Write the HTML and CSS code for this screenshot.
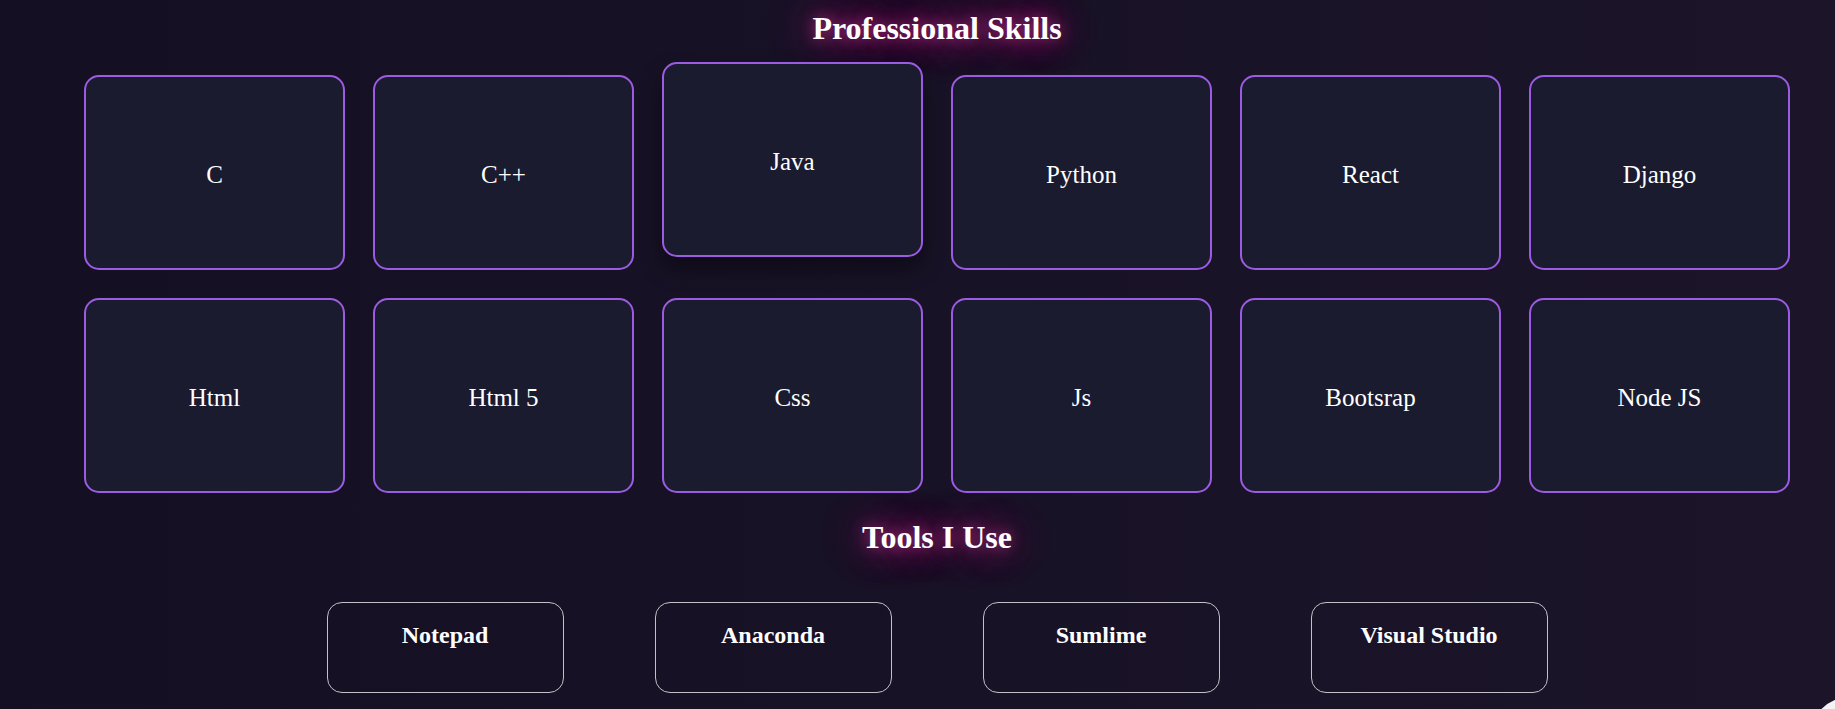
FILE: index.html
```html
<!DOCTYPE html>
<html lang="en">
<head>
<meta charset="utf-8">
<title>Skills</title>
<link rel="stylesheet" href="styles.css">
</head>
<body>
<main class="skills">
  <h2 class="section-title">Professional Skills</h2>
  <div class="skill-grid">
    <div class="skill-card">C</div>
    <div class="skill-card">C++</div>
    <div class="skill-card is-hover">Java</div>
    <div class="skill-card">Python</div>
    <div class="skill-card">React</div>
    <div class="skill-card">Django</div>
    <div class="skill-card">Html</div>
    <div class="skill-card">Html 5</div>
    <div class="skill-card">Css</div>
    <div class="skill-card">Js</div>
    <div class="skill-card">Bootsrap</div>
    <div class="skill-card">Node JS</div>
  </div>
  <h2 class="section-title tools-title">Tools I Use</h2>
  <div class="tool-list">
    <div class="tool-card"><h3 class="tool-name">Notepad</h3></div>
    <div class="tool-card"><h3 class="tool-name">Anaconda</h3></div>
    <div class="tool-card"><h3 class="tool-name">Sumlime</h3></div>
    <div class="tool-card"><h3 class="tool-name">Visual Studio</h3></div>
  </div>
</main>
<a class="fab" href="#" aria-label="Back to top"></a>
</body>
</html>
```
FILE: styles.css
```css
html, body {
  margin: 0;
  padding: 0;
}

body {
  min-height: 709px;
  overflow: hidden;
  background: linear-gradient(to right, #140f22 0%, #181226 50%, #1c1529 100%);
  color: #ffffff;
  font-family: "Liberation Serif", "Times New Roman", serif;
}

.skills {
  padding: 10px 45px 0 84px;
  display: flex;
  flex-direction: column;
}

.section-title {
  margin: 0;
  font-size: 32px;
  font-weight: 700;
  line-height: 37px;
  text-align: center;
  color: #ffffff;
  text-shadow: 0 0 14px rgba(255, 60, 175, 0.55), 0 0 34px rgba(255, 60, 175, 0.8), 0 0 56px rgba(255, 60, 175, 0.45);
}

.skill-grid {
  margin-top: 28px;
  display: grid;
  grid-template-columns: repeat(6, 1fr);
  grid-auto-rows: 195px;
  column-gap: 28px;
  row-gap: 28px;
}

.skill-card {
  box-sizing: border-box;
  display: flex;
  align-items: center;
  justify-content: center;
  padding-top: 4px;
  background: #1b1b2f;
  border: 2px solid #9c5ce2;
  border-radius: 15px;
  font-size: 25px;
  color: #ffffff;
}

.skill-card.is-hover {
  transform: translateY(-13px);
  box-shadow: 0 12px 22px rgba(0, 0, 0, 0.4);
}

.tools-title {
  margin-top: 26px;
}

.tool-list {
  margin-top: 46px;
  display: flex;
  justify-content: center;
  gap: 91px;
}

.tool-card {
  box-sizing: border-box;
  width: 237px;
  height: 91px;
  padding-top: 18px;
  border: 1px solid #c4c0c8;
  border-radius: 15px;
  text-align: center;
}

.tool-name {
  margin: 0;
  font-size: 24px;
  font-weight: 700;
  line-height: 28px;
  color: #ffffff;
}

.fab {
  position: fixed;
  left: 1810px;
  top: 697px;
  width: 80px;
  height: 80px;
  border-radius: 50%;
  background: #f4f2f6;
}
```
